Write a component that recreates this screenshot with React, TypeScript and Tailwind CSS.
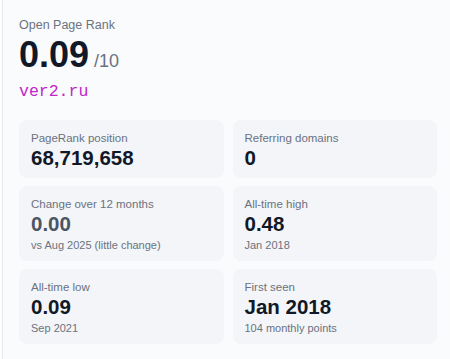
import React from 'react';

type Stat = { label: string; value: string; sub?: string; muted?: boolean };

const stats: Stat[] = [
  { label: 'PageRank position', value: '68,719,658' },
  { label: 'Referring domains', value: '0' },
  { label: 'Change over 12 months', value: '0.00', sub: 'vs Aug 2025 (little change)', muted: true },
  { label: 'All-time high', value: '0.48', sub: 'Jan 2018' },
  { label: 'All-time low', value: '0.09', sub: 'Sep 2021' },
  { label: 'First seen', value: 'Jan 2018', sub: '104 monthly points' },
];

export default function App() {
  return (
    <div className="w-[450px] h-[359px] bg-white overflow-hidden font-['Liberation_Sans',Arial,sans-serif]">
      <div className="ml-[2px] h-full border-l border-[#e6e8ec] bg-[#fafbfd] pl-4 pr-3 pt-[15px]">
        <div className="text-[12.5px] leading-5 text-[#6b7280]">Open Page Rank</div>
        <div className="flex items-baseline gap-[5px]">
          <span className="text-[36px] leading-10 font-bold text-[#111827]">0.09</span>
          <span className="text-[18px] leading-6 text-[#6b7280]">/10</span>
        </div>
        <div className="mt-[7px] text-[16.5px] leading-5 text-[#c026c8] font-['Liberation_Mono',monospace]">ver2.ru</div>

        <div className="grid grid-cols-2 gap-x-[9px] gap-y-2 mt-[18px] w-[418px]">
          {stats.map((s) => (
            <div key={s.label} className="rounded-lg bg-[#f3f5f8] px-3 pt-[10px] pb-[9px]">
              <div className="text-[11.5px] leading-4 text-[#6b7280]">{s.label}</div>
              <div
                className={`text-[20.5px] leading-[23px] font-bold ${s.muted ? 'text-[#4b5563]' : 'text-[#111827]'}`}
              >
                {s.value}
              </div>
              {s.sub && <div className="text-[11px] leading-4 text-[#6b7280] mt-[2px] -mb-px">{s.sub}</div>}
            </div>
          ))}
        </div>
      </div>
    </div>
  );
}
